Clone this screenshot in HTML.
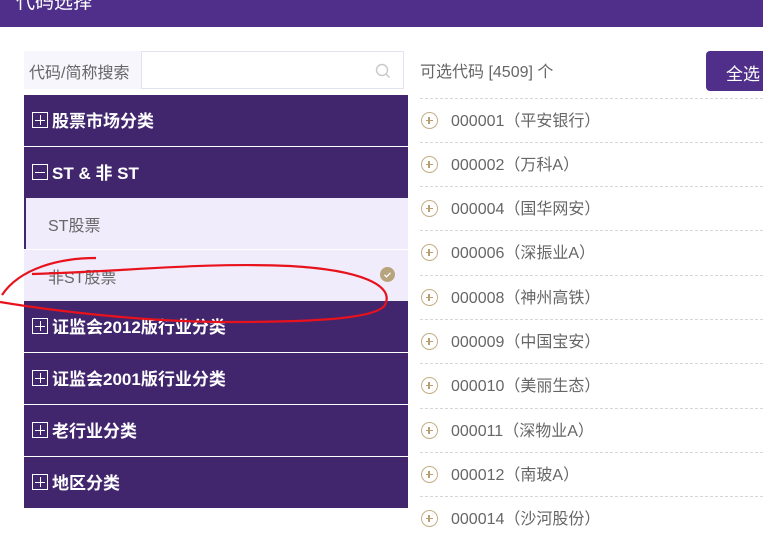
<!DOCTYPE html>
<html><head><meta charset="utf-8"><style>
*{margin:0;padding:0;box-sizing:border-box}
body{width:763px;height:538px;overflow:hidden;background:#fff;font-family:"Liberation Sans","Noto Sans CJK SC",sans-serif;position:relative}
.hdr{position:absolute;left:0;top:0;width:763px;height:27px;background:#4f2f8a;color:#fff;font-size:19px}
.hdr span{position:absolute;left:16px;top:-13px}
.search{position:absolute;left:24px;top:51px;width:380px;height:38px;background:#f7f6fc}
.search .lbl{position:absolute;left:5px;top:8px;font-size:16px;color:#666}
.search .inp{position:absolute;left:117px;top:0;width:263px;height:38px;background:#fff;border:1px solid #e4e2f0}
.m{position:absolute;left:24px;width:384px;height:51px;background:#41266e;color:#fff;font-size:17px;font-weight:bold}
.m .ic{position:absolute;left:8px;top:17px;width:16px;height:16px;border:1px solid #fff}
.m .ic:before{content:"";position:absolute;left:2px;top:6.5px;width:10px;height:1.5px;background:#fff}
.m .ic.p:after{content:"";position:absolute;left:6.5px;top:2px;width:1.5px;height:10px;background:#fff}
.m .t{position:absolute;left:28px;top:12px}
.s{position:absolute;left:24px;width:384px;height:51px;background:#f0ecfb;color:#666;font-size:16px}
.s span{position:absolute;left:24px;top:14px}
.cnt{position:absolute;left:420px;top:58px;font-size:16px;color:#666}
.btn{position:absolute;left:706px;top:51px;width:70px;height:40px;background:#4f2f8a;border-radius:4px;color:#fff;font-size:17px}
.btn span{position:absolute;left:20px;top:9px}
.row{position:absolute;left:420px;width:343px;height:44px;border-top:1px dashed #d6d6d6;color:#666;font-size:16px}
.row .c{position:absolute;left:1px;top:13px;width:17px;height:17px;border:1.5px solid #c4ad85;border-radius:50%}
.row .c:before{content:"";position:absolute;left:3.5px;top:6.5px;width:7px;height:1.3px;background:#b89f72}
.row .c:after{content:"";position:absolute;left:6.4px;top:3.5px;width:1.3px;height:7px;background:#b89f72}
.row span{position:absolute;left:31px;top:8px}
</style></head><body>
<div class="hdr"><span>代码选择</span></div>
<div class="search"><span class="lbl">代码/简称搜索</span><div class="inp">
<svg style="position:absolute;left:233px;top:11px" width="16" height="16" viewBox="0 0 16 16"><circle cx="7" cy="7" r="5.5" fill="none" stroke="#c8c8c8" stroke-width="1.4"/><path d="M11 11l3.5 3.5" stroke="#c8c8c8" stroke-width="1.4"/></svg></div></div>
<div class="m" style="top:95px"><div class="ic p"></div><span class="t">股票市场分类</span></div>
<div class="m" style="top:147px"><div class="ic"></div><span class="t">ST &amp; 非 ST</span></div>
<div class="s" style="top:198px;border-left:2px solid #41266e"><span style="left:22px">ST股票</span></div>
<div class="s" style="top:250px"><span>非ST股票</span>
<svg style="position:absolute;left:356px;top:17px" width="15" height="15" viewBox="0 0 15 15"><circle cx="7.5" cy="7.5" r="7.5" fill="#b8a47c"/><path d="M4.5 7.8l2 2 4-4" fill="none" stroke="#fff" stroke-width="1.3"/></svg></div>
<div class="m" style="top:301px"><div class="ic p"></div><span class="t">证监会2012版行业分类</span></div>
<div class="m" style="top:353px"><div class="ic p"></div><span class="t">证监会2001版行业分类</span></div>
<div class="m" style="top:405px"><div class="ic p"></div><span class="t">老行业分类</span></div>
<div class="m" style="top:457px"><div class="ic p"></div><span class="t">地区分类</span></div>
<div class="cnt">可选代码 [4509] 个</div>
<div class="btn"><span>全选</span></div>
<div class="row" style="top:98px"><div class="c"></div><span>000001（平安银行）</span></div>
<div class="row" style="top:142px"><div class="c"></div><span>000002（万科A）</span></div>
<div class="row" style="top:186px"><div class="c"></div><span>000004（国华网安）</span></div>
<div class="row" style="top:230px"><div class="c"></div><span>000006（深振业A）</span></div>
<div class="row" style="top:275px"><div class="c"></div><span>000008（神州高铁）</span></div>
<div class="row" style="top:319px"><div class="c"></div><span>000009（中国宝安）</span></div>
<div class="row" style="top:363px"><div class="c"></div><span>000010（美丽生态）</span></div>
<div class="row" style="top:408px"><div class="c"></div><span>000011（深物业A）</span></div>
<div class="row" style="top:452px"><div class="c"></div><span>000012（南玻A）</span></div>
<div class="row" style="top:496px"><div class="c"></div><span>000014（沙河股份）</span></div>
<svg style="position:absolute;left:0;top:0" width="763" height="538">
<path d="M96 258 C60 258 20 268 2 295" fill="none" stroke="#e8121c" stroke-width="2.2"/>
<path d="M32 274 C120 272 200 262 290 266 C360 270 395 285 385 305 C375 320 300 322 230 322 C150 322 60 312 0 302" fill="none" stroke="#e8121c" stroke-width="2.2"/>
</svg>
</body></html>
